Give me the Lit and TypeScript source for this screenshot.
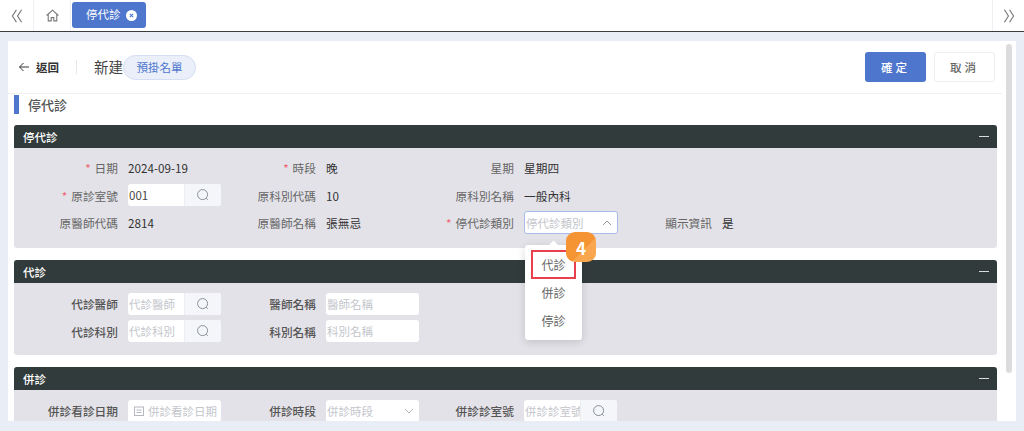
import { css, html, LitElement, svg } from "lit";
import { customElement } from "lit/decorators.js";

const search = svg`<svg class="ico" viewBox="0 0 14 14" width="14" height="14"><circle cx="6.6" cy="6.6" r="5" fill="none" stroke="#8a9099" stroke-width="1"/><path d="M10.2 10.2l1.6 1.6" stroke="#8a9099" stroke-width="1" fill="none"/></svg>`;

@customElement("app-root")
class AppRoot extends LitElement {
  static styles = css`
    :host {
      display: flex;
      flex-direction: column;
      height: 431px;
      overflow: hidden;
      background: #e9edf6;
      font-family: "Noto Sans CJK TC", "Noto Sans", sans-serif;
      font-size: 11.5px;
      color: #333;
    }
    .tabs {
      height: 31px;
      flex: none;
      display: flex;
      align-items: stretch;
      background: #fff;
      border-bottom: 1px solid #3a3d40;
    }
    .tab-btn {
      width: 33px;
      display: flex;
      align-items: center;
      justify-content: center;
      border-right: 1px solid #eef0f4;
    }
    .tab-home {
      width: 36px;
      margin-right: 1px;
    }
    .tab-fill {
      flex: 1;
    }
    .tab-right {
      width: 31px;
      border-right: 0;
      border-left: 1px solid #eef0f4;
    }
    .tab-active {
      align-self: flex-start;
      margin-top: 2px;
      width: 74px;
      height: 26px;
      box-sizing: border-box;
      background: #4e76cd;
      border-radius: 3px;
      color: #fff;
      display: flex;
      align-items: center;
      gap: 5px;
      padding-left: 14px;
      line-height: 1;
    }
    .tab-x {
      width: 11px;
      height: 11px;
      display: block;
    }
    .panel {
      margin: 9px 8px 10px 8px;
      flex: 1;
      min-height: 0;
      background: #fff;
      overflow: hidden;
      position: relative;
    }
    .scroll {
      position: absolute;
      left: 998px;
      top: 3px;
      width: 6px;
      height: 329px;
      border-radius: 3px;
      background: #dcdcdf;
    }
    .head {
      height: 53px;
      margin-right: 14px;
      box-sizing: border-box;
      border-bottom: 1px solid #eef0f4;
      display: flex;
      align-items: center;
      padding-left: 10px;
    }
    .back {
      display: flex;
      align-items: center;
      gap: 6px;
      font-weight: 700;
      color: #333;
      width: 58px;
      height: 14px;
      border-right: 1px solid #e6e8ec;
    }
    .new {
      margin-left: 17px;
      font-size: 14.5px;
      color: #444;
      line-height: 1;
    }
    .pill {
      width: 73px;
      height: 25px;
      box-sizing: border-box;
      border: 1px solid #d5def2;
      border-radius: 13px;
      background: #eaeff9;
      color: #4e76cd;
      display: flex;
      align-items: center;
      justify-content: center;
    }
    .actions {
      margin-left: auto;
      display: flex;
      gap: 8px;
      padding-right: 7px;
    }
    .btn {
      width: 61px;
      height: 30px;
      box-sizing: border-box;
      border-radius: 3px;
      display: flex;
      align-items: center;
      justify-content: center;
      letter-spacing: 3px;
      font-weight: 500;
    }
    .primary {
      background: #4e76cd;
      color: #fff;
    }
    .plain {
      background: #fff;
      border: 1px solid #eceef1;
      color: #666;
    }
    .title {
      margin: 1px 0 0 6px;
      height: 19px;
      border-left: 5px solid #4e76cd;
      padding-left: 9px;
      font-size: 13px;
      line-height: 19px;
      color: #555;
      font-weight: 500;
    }
    .card {
      margin: 12px 19px 12px 6px;
      background: #e3e2e8;
      border-radius: 3px;
    }
    .card.first {
      margin-top: 11px;
    }
    .bar {
      height: 23px;
      box-sizing: border-box;
      background: #323b3c;
      border-radius: 3px 3px 0 0;
      color: #fff;
      font-weight: 500;
      display: flex;
      align-items: center;
      justify-content: space-between;
      padding: 0 8px 0 9px;
    }
    .dash {
      width: 10px;
      height: 1px;
      background: #d9dcdc;
    }
    .body {
      display: grid;
      grid-template-columns: repeat(4, 198px);
      padding-top: 6px;
      grid-auto-rows: 27.5px;
      align-items: center;
      align-content: start;
    }
    .body.tall {
      height: 94px;
    }
    .body.mid {
      height: 64px;
      padding-top: 7px;
      padding-bottom: 1px;
    }
    .body.short {
      height: 40px;
      padding-top: 7px;
    }
    .field {
      display: flex;
      align-items: center;
      gap: 10px;
    }
    .label {
      width: 104px;
      text-align: right;
      color: #666;
      flex: none;
      white-space: nowrap;
      font-size: 11.7px;
    }
    .label.dark {
      color: #555;
      font-weight: 500;
    }
    .req {
      color: #f0616d;
      margin-right: 4px;
    }
    .value {
      color: #333;
      white-space: nowrap;
      font-size: 11.7px;
    }
    .input {
      width: 93px;
      height: 22px;
      flex: none;
      border-radius: 3px;
      background: #fff;
      display: flex;
      overflow: hidden;
      align-items: center;
      box-sizing: border-box;
      position: relative;
    }
    .text {
      flex: 1;
      min-width: 0;
      padding-left: 1px;
      white-space: nowrap;
      overflow: hidden;
      color: #c4c6cc;
    }
    .text.set {
      color: #444;
    }
    .addon {
      width: 37px;
      height: 100%;
      flex: none;
      background: #f4f6fa;
      border-left: 1px solid #eceef3;
      box-sizing: border-box;
      display: flex;
      align-items: center;
      justify-content: center;
    }
    .date {
      gap: 3px;
      padding-left: 5px;
      color: #c4c6cc;
      white-space: nowrap;
    }
    .select {
      justify-content: space-between;
      padding-right: 4px;
    }
    .select.open {
      width: 94px;
      height: 23px;
      border: 1px solid #a9bce8;
    }
    .menu-wrap {
      position: relative;
    }
    .menu {
      position: absolute;
      left: 1px;
      top: 34px;
      width: 57px;
      height: 95px;
      box-sizing: border-box;
      background: #fff;
      border-radius: 3px;
      box-shadow: 0 2px 8px rgba(0, 0, 0, 0.15);
      padding-top: 5px;
      z-index: 3;
      color: #666;
    }
    .menu::before {
      content: "";
      position: absolute;
      left: 25px;
      top: -3px;
      width: 7px;
      height: 7px;
      background: #fff;
      transform: rotate(45deg);
    }
    .opt {
      height: 28px;
      display: flex;
      align-items: center;
      justify-content: center;
      position: relative;
      font-size: 12px;
    }
    .opt.hit {
      margin: 0 6px -1px;
      height: 29px;
      border: 2px solid #e8404c;
      box-sizing: border-box;
    }
    .badge {
      position: absolute;
      left: 33px;
      top: -20px;
      width: 30px;
      height: 30px;
      border-radius: 9px;
      background: linear-gradient(135deg, #f59432 60%, #f9a64f 60%);
      color: #fff;
      font-size: 17px;
      font-weight: 700;
      display: flex;
      align-items: center;
      justify-content: center;
      z-index: 4;
      line-height: 1;
    }
  `;

  field(label: string, value: string, req = false) {
    return html`<div class="field">
      <span class="label">${req ? html`<span class="req">*</span>` : ""}${label}</span>
      <span class="value">${value}</span>
    </div>`;
  }

  searchField(label: string, text: string, opts: { req?: boolean; set?: boolean; dark?: boolean } = {}) {
    return html`<div class="field">
      <span class="label ${opts.dark ? "dark" : ""}">${opts.req ? html`<span class="req">*</span>` : ""}${label}</span>
      <div class="input">
        <span class="text ${opts.set ? "set" : ""}">${text}</span>
        <span class="addon">${search}</span>
      </div>
    </div>`;
  }

  textField(label: string, text: string) {
    return html`<div class="field">
      <span class="label dark">${label}</span>
      <div class="input"><span class="text">${text}</span></div>
    </div>`;
  }

  render() {
    return html`
      <div class="tabs">
        <div class="tab-btn">
          <svg viewBox="0 0 14 14" width="16" height="16" fill="none" stroke="#777" stroke-width="1"><path d="M6.5 1.5L3 7l3.5 5.5M11 1.5L7.5 7l3.5 5.5"/></svg>
        </div>
        <div class="tab-btn tab-home">
          <svg viewBox="0 0 14 14" width="15" height="15" fill="none" stroke="#777" stroke-width="1"><path d="M1.5 7L7 2l5.5 5M3 6v6h2.8V9h2.4v3H11V6"/></svg>
        </div>
        <div class="tab-active">
          <span>停代診</span>
          <svg class="tab-x" viewBox="0 0 11 11"><circle cx="5.5" cy="5.5" r="5.5" fill="#fff"/><path d="M3.8 3.8l3.4 3.4M7.2 3.8L3.8 7.2" stroke="#4e76cd" stroke-width="1.1"/></svg>
        </div>
        <div class="tab-fill"></div>
        <div class="tab-btn tab-right">
          <svg viewBox="0 0 14 14" width="16" height="16" fill="none" stroke="#777" stroke-width="1"><path d="M3 1.5L6.5 7 3 12.5M7.5 1.5L11 7l-3.5 5.5"/></svg>
        </div>
      </div>
      <div class="panel">
        <div class="scroll"></div>
        <div class="head">
          <div class="back">
            <svg viewBox="0 0 12 12" width="12" height="12" fill="none" stroke="#333" stroke-width="1"><path d="M11 6H1.5M5.5 2L1.5 6l4 4"/></svg>
            <span>返回</span>
          </div>
          <span class="new">新建</span>
          <span class="pill">預掛名單</span>
          <div class="actions">
            <div class="btn primary">確定</div>
            <div class="btn plain">取消</div>
          </div>
        </div>
        <div class="title">停代診</div>

        <div class="card first">
          <div class="bar"><span>停代診</span><span class="dash"></span></div>
          <div class="body tall">
            ${this.field("日期", "2024-09-19", true)}
            ${this.field("時段", "晚", true)}
            ${this.field("星期", "星期四")}
            <div></div>
            ${this.searchField("原診室號", "001", { req: true, set: true })}
            ${this.field("原科別代碼", "10")}
            ${this.field("原科別名稱", "一般內科")}
            <div></div>
            ${this.field("原醫師代碼", "2814")}
            ${this.field("原醫師名稱", "張無忌")}
            <div class="field">
              <span class="label"><span class="req">*</span>停代診類別</span>
              <div class="menu-wrap">
                <div class="input select open">
                  <span class="text">停代診類別</span>
                  <svg viewBox="0 0 12 12" width="12" height="12" fill="none" stroke="#9a9ea6" stroke-width="1"><path d="M2 8l4-4 4 4"/></svg>
                </div>
                <div class="menu">
                  <div class="opt hit">代診<span class="badge">4</span></div>
                  <div class="opt">併診</div>
                  <div class="opt">停診</div>
                </div>
              </div>
            </div>
            ${this.field("顯示資訊", "是")}
          </div>
        </div>

        <div class="card">
          <div class="bar"><span>代診</span><span class="dash"></span></div>
          <div class="body mid">
            ${this.searchField("代診醫師", "代診醫師", { dark: true })}
            ${this.textField("醫師名稱", "醫師名稱")}
            <div></div><div></div>
            ${this.searchField("代診科別", "代診科別", { dark: true })}
            ${this.textField("科別名稱", "科別名稱")}
          </div>
        </div>

        <div class="card">
          <div class="bar"><span>併診</span><span class="dash"></span></div>
          <div class="body short">
            <div class="field">
              <span class="label dark">併診看診日期</span>
              <div class="input date">
                <svg viewBox="0 0 12 12" width="12" height="12" fill="none" stroke="#b5b8bf" stroke-width="1"><rect x="1.5" y="2" width="9" height="8.5"/><path d="M3.5 5h5M3.5 7.5h5"/></svg>
                <span>併診看診日期</span>
              </div>
            </div>
            <div class="field">
              <span class="label dark">併診時段</span>
              <div class="input select">
                <span class="text">併診時段</span>
                <svg viewBox="0 0 12 12" width="12" height="12" fill="none" stroke="#b5b8bf" stroke-width="1"><path d="M2 4l4 4 4-4"/></svg>
              </div>
            </div>
            ${this.searchField("併診診室號", "併診診室號", { dark: true })}
          </div>
        </div>
      </div>
    `;
  }
}
